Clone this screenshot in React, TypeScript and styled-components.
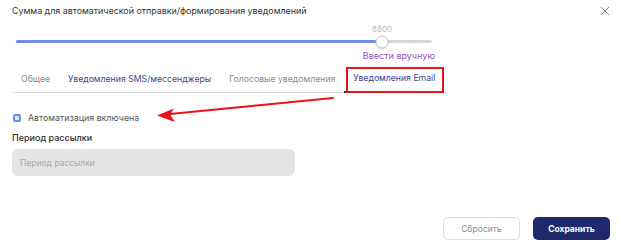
import React from "react"
import styled, { createGlobalStyle } from "styled-components"

const GlobalStyle = createGlobalStyle`
  html, body {
    margin: 0;
    padding: 0;
    background: #ffffff;
  }
  body {
    font-family: Inter, "Noto Sans", "Liberation Sans", sans-serif;
    -webkit-font-smoothing: antialiased;
  }
`

const tabs = [
  { label: "Общее", tone: "muted" },
  { label: "Уведомления SMS/мессенджеры", tone: "accent" },
  { label: "Голосовые уведомления", tone: "muted" },
  { label: "Уведомления Email", tone: "accent", active: true },
]

const App: React.FC = () => {
  const value = 8800
  const max = 10000
  const percent = (value / max) * 100

  return (
    <>
      <GlobalStyle />
      <Page>
        <Header>
          <Title>Сумма для автоматической отправки/формирования уведомлений</Title>
          <CloseButton aria-label="Закрыть">
            <svg width="10" height="10" viewBox="0 0 10 10">
              <path d="M1 1 L9 9 M9 1 L1 9" stroke="#777" strokeWidth="0.9" fill="none" />
            </svg>
          </CloseButton>
        </Header>

        <SliderBlock>
          <Track>
            <Fill style={{ width: `${percent}%` }} />
            <Thumb style={{ left: `${percent}%` }}>
              <ThumbValue>{value}</ThumbValue>
            </Thumb>
          </Track>
        </SliderBlock>

        <ManualRow>
          <ManualLink href="#">Ввести вручную</ManualLink>
        </ManualRow>

        <TabBar>
          {tabs.map(t => (
            <Tab key={t.label} tone={t.tone} active={t.active}>
              {t.label}
              {t.active && <Highlight />}
            </Tab>
          ))}
        </TabBar>

        <CheckRow>
          <Checkbox />
          <CheckLabel>Автоматизация включена</CheckLabel>
        </CheckRow>

        <FieldLabel>Период рассылки</FieldLabel>
        <Input placeholder="Период рассылки" />

        <Footer>
          <ResetButton>Сбросить</ResetButton>
          <SaveButton>Сохранить</SaveButton>
        </Footer>

        <Arrow width="624" height="247" viewBox="0 0 624 247">
          <path d="M333 98 L170 114" stroke="#e8141a" strokeWidth="2" fill="none" strokeLinecap="round" />
          <path d="M157 115.5 L174 108.5 L170 114.5 L175 122 Z" fill="#e8141a" />
        </Arrow>
      </Page>
    </>
  )
}

const Page = styled.div`
  position: relative;
  width: 624px;
  height: 247px;
  padding: 0 12px;
  box-sizing: border-box;
  overflow: hidden;
`

const Header = styled.div`
  display: flex;
  justify-content: space-between;
  align-items: center;
  padding-top: 5px;
  height: 12px;
`

const Title = styled.div`
  font-size: 8.9px;
  line-height: 12px;
  color: #333;
`

const CloseButton = styled.button`
  border: none;
  background: none;
  padding: 0;
  margin-right: 2px;
  margin-top: -1px;
  display: flex;
  cursor: pointer;
`

const SliderBlock = styled.div`
  margin: 23px 0 0 4px;
  width: 416px;
`

const Track = styled.div`
  position: relative;
  height: 3px;
  border-radius: 2px;
  background: #d6d6d6;
`

const Fill = styled.div`
  height: 100%;
  border-radius: 2px;
  background: #6f8fe0;
`

const Thumb = styled.div`
  position: absolute;
  top: 50%;
  width: 13px;
  height: 13px;
  border-radius: 50%;
  background: #fff;
  border: 1px solid #c9c9c9;
  box-sizing: border-box;
  transform: translate(-50%, -50%);
  box-shadow: 0 1px 2px rgba(0, 0, 0, 0.12);
`

const ThumbValue = styled.span`
  position: absolute;
  bottom: 14px;
  left: 50%;
  transform: translateX(-50%);
  font-size: 8px;
  color: #b8b8b8;
`

const ManualRow = styled.div`
  display: flex;
  justify-content: flex-end;
  width: 423px;
  margin-top: 7px;
`

const ManualLink = styled.a`
  font-size: 9px;
  line-height: 12px;
  color: #9a4fb5;
  text-decoration: none;
`

const TabBar = styled.div`
  display: flex;
  width: 434px;
  height: 27px;
  margin-top: 3px;
  border-bottom: 1px solid #dcdcdc;
`

const Tab = styled.div<{ tone: string; active?: boolean }>`
  position: relative;
  display: flex;
  align-items: center;
  padding: 0 9px;
  font-size: 8.7px;
  color: ${p => (p.tone === "accent" ? "#3f4592" : "#8a8a8a")};
  border-bottom: ${p => (p.active ? "2px solid #252a5c" : "none")};
  margin-bottom: ${p => (p.active ? "-1px" : "0")};
  white-space: nowrap;
`

const Highlight = styled.span`
  position: absolute;
  left: 2px;
  right: 0;
  top: 2px;
  bottom: -2px;
  border: 2px solid #e8141a;
  pointer-events: none;
`

const CheckRow = styled.div`
  display: flex;
  align-items: center;
  gap: 7px;
  margin-top: 19px;
  padding-left: 1px;
`

const Checkbox = styled.span`
  width: 8px;
  height: 8px;
  box-sizing: border-box;
  border: 2px solid #6b8ee0;
  border-radius: 2px;
  background: #dce6fb;
`

const CheckLabel = styled.span`
  font-size: 8.8px;
  line-height: 12px;
  color: #555;
`

const FieldLabel = styled.div`
  margin-top: 8px;
  font-size: 9px;
  line-height: 12px;
  font-weight: 500;
  color: #2d2d2d;
`

const Input = styled.input`
  display: block;
  margin-top: 5px;
  width: 283px;
  height: 27px;
  box-sizing: border-box;
  border: none;
  border-radius: 6px;
  background: #e4e4e4;
  padding: 0 8px;
  font-family: inherit;
  font-size: 8.5px;
  outline: none;

  &::placeholder {
    color: #aaa;
  }
`

const Footer = styled.div`
  display: flex;
  justify-content: flex-end;
  gap: 13px;
  margin-top: 41px;
  padding-right: 2px;
`

const BaseButton = styled.button`
  width: 77px;
  height: 23px;
  border-radius: 5px;
  font-family: inherit;
  font-size: 8.5px;
  cursor: pointer;
`

const ResetButton = styled(BaseButton)`
  background: #fff;
  border: 1px solid #dcdcdc;
  color: #8a8a8a;
`

const SaveButton = styled(BaseButton)`
  background: #1f2a6d;
  border: none;
  color: #fff;
  font-weight: 700;
`

const Arrow = styled.svg`
  position: absolute;
  left: 0;
  top: 0;
  pointer-events: none;
`

export default App
